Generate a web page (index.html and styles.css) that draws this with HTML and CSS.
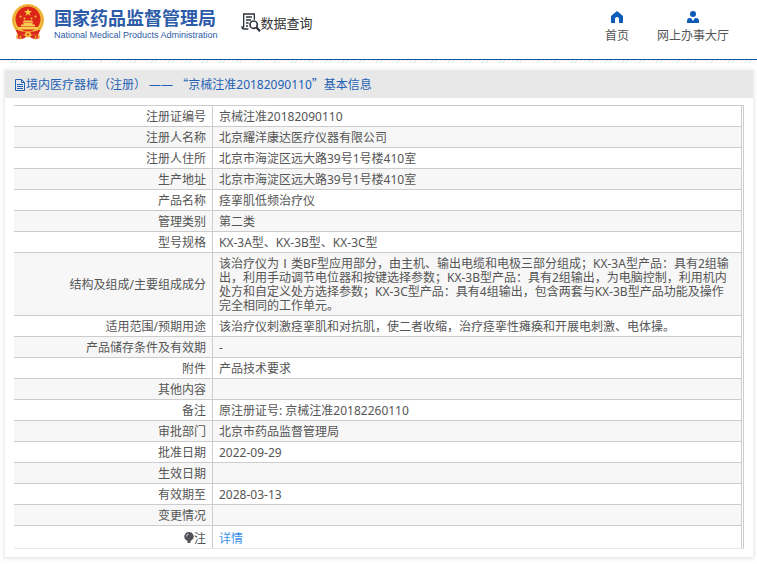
FILE: index.html
```html
<!DOCTYPE html>
<html lang="zh-CN">
<head>
<meta charset="utf-8">
<title>数据查询 - 国家药品监督管理局</title>
<link rel="stylesheet" href="styles.css">
</head>
<body>
<header class="site-header">
  <a class="brand" href="#">
    <svg class="emblem" viewBox="0 0 66 72" aria-hidden="true">
      <path d="M12 54 10 68q9 4 16 0l7-5 7 5q8 4 16 0l-2-14z" fill="#d9281c"/>
      <circle cx="33" cy="32" r="32" fill="#f2bb3d"/>
      <circle cx="33" cy="32" r="29" fill="none" stroke="#e39a2c" stroke-width="2" stroke-dasharray="3 3"/>
      <circle cx="33" cy="30" r="25" fill="#dc2419"/>
      <path d="m33 9 2 5h6l-5 4 2 6-5-4-5 4 2-6-5-4h6z" fill="#f7d13d"/>
      <g fill="#f5c93c"><circle cx="18" cy="25" r="2"/><circle cx="48" cy="25" r="2"/><circle cx="26" cy="29" r="2"/><circle cx="40" cy="29" r="2"/></g>
      <path d="M22 37l3-4h16l3 4zM24 38h18v3h5v4H19v-4h5zM13 46h40v5H13z" fill="#f6cc50"/>
      <path d="M8 51q25 10 50 0l-3 7q-11 5-15 3l-7-3-7 3q-8 2-15-3z" fill="#d9281c"/>
      <circle cx="33" cy="61" r="6" fill="#f2bb3d"/><circle cx="33" cy="61" r="2" fill="#d9281c"/>
      <path d="M12 59v10M18 63v8M48 63v8M54 59v10" stroke="#eda936" stroke-width="3"/>
    </svg>
    <span class="brand-text">
      <span class="brand-cn">国家药品监督管理局</span>
      <span class="brand-en">National Medical Products Administration</span>
    </span>
  </a>
  <a class="section" href="#">
    <svg class="search-icon" viewBox="0 0 60 60" fill="none" stroke="#30343d" stroke-width="4" aria-hidden="true">
      <path d="M22 48H9q-6 0-6-6h5V3h32v17M15 12h18M15 21h15M15 30h8M15 39h6"/>
      <circle cx="38" cy="35" r="11" stroke-width="5"/>
      <path d="m46 43 11 12" stroke-width="7"/>
    </svg>
    <span>数据查询</span>
  </a>
  <nav class="top-nav">
    <a href="#">
      <svg viewBox="0 0 12 12" aria-hidden="true"><path d="M6 0 0 5v7h4V8q0-2 2-2t2 2v4h4V5z" fill="#0f5bb8"/></svg>
      <span>首页</span>
    </a>
    <a href="#">
      <svg viewBox="0 0 12 12" aria-hidden="true"><circle cx="6" cy="3" r="3" fill="#0f5bb8"/><path d="M0 12V10q0-3 3-3h1l2 3 2-3h1q3 0 3 3v2z" fill="#0f5bb8"/></svg>
      <span>网上办事大厅</span>
    </a>
  </nav>
</header>
<main class="card">
  <h1 class="card-title">
    <svg viewBox="0 0 12 12" fill="none" stroke="#1f62b5" aria-hidden="true"><path d="M1.5.5h6l3 3v8h-9zM7.5.5v3h3M3 5.500h6M3 7.500h6M3 9.500h6"/></svg>
    <span>境内医疗器械（注册） —— <span class="wide">“</span>京械注准20182090110<span class="wide">”</span>基本信息</span>
  </h1>
  <div class="table-wrap">
    <table class="info">
      <tbody>
        <tr><th scope="row">注册证编号</th><td>京械注准20182090110</td></tr>
        <tr><th scope="row">注册人名称</th><td>北京耀洋康达医疗仪器有限公司</td></tr>
        <tr><th scope="row">注册人住所</th><td>北京市海淀区远大路39号1号楼410室</td></tr>
        <tr><th scope="row">生产地址</th><td>北京市海淀区远大路39号1号楼410室</td></tr>
        <tr><th scope="row">产品名称</th><td>痉挛肌低频治疗仪</td></tr>
        <tr><th scope="row">管理类别</th><td>第二类</td></tr>
        <tr><th scope="row">型号规格</th><td>KX-3A型、KX-3B型、KX-3C型</td></tr>
        <tr><th scope="row">结构及组成/主要组成成分</th><td>该治疗仪为Ⅰ类BF型应用部分，由主机、输出电缆和电极三部分组成；KX-3A型产品：具有2组输出，利用手动调节电位器和按键选择参数；KX-3B型产品：具有2组输出，为电脑控制，利用机内处方和自定义处方选择参数；KX-3C型产品：具有4组输出，包含两套与KX-3B型产品功能及操作完全相同的工作单元。</td></tr>
        <tr><th scope="row">适用范围/预期用途</th><td>该治疗仪刺激痉挛肌和对抗肌，使二者收缩，治疗痉挛性瘫痪和开展电刺激、电体操。</td></tr>
        <tr><th scope="row">产品储存条件及有效期</th><td>-</td></tr>
        <tr><th scope="row">附件</th><td>产品技术要求</td></tr>
        <tr><th scope="row">其他内容</th><td></td></tr>
        <tr><th scope="row">备注</th><td>原注册证号: 京械注准20182260110</td></tr>
        <tr><th scope="row">审批部门</th><td>北京市药品监督管理局</td></tr>
        <tr><th scope="row">批准日期</th><td>2022-09-29</td></tr>
        <tr><th scope="row">生效日期</th><td></td></tr>
        <tr><th scope="row">有效期至</th><td>2028-03-13</td></tr>
        <tr><th scope="row">变更情况</th><td></td></tr>
        <tr class="note"><th scope="row"><svg viewBox="0 0 10 12" aria-hidden="true"><path d="M5 0a4.500 4.500 0 0 1 3 8L6.500 9v2h-3v-2L2 8a4.500 4.500 0 0 1 3-8z" fill="#505257"/><path d="M2.500 4.500q0-2 2-2.500" fill="none" stroke="#ddd"/></svg>注</th><td><a href="#">详情</a></td></tr>
      </tbody>
    </table>
  </div>
</main>
</body>
</html>
```
FILE: styles.css
```css
* { box-sizing: border-box; }

body {
  margin: 0;
  background: #fff;
  color: #555;
  font: 12px/14px "Noto Sans", "Noto Sans CJK SC", sans-serif;
}

a { color: inherit; text-decoration: none; }
svg { display: block; }

.site-header {
  display: flex;
  align-items: flex-start;
  height: 63px;
  padding: 0 28px 0 11px;
  border-bottom: 3px solid transparent;
  background: linear-gradient(#0f549b, #0f549b) 0 100% / 100% 1px no-repeat padding-box,
    repeating-linear-gradient(135deg, #e2eaf3 0 1px, #fff 1px 3px) 0 100% / 100% 3px no-repeat border-box;
}

.brand { display: flex; gap: 9px; padding-top: 4px; }
.emblem { width: 34px; height: 36px; }
.brand-text { display: flex; flex-direction: column; color: #2c5ba8; padding-top: 3px; }
.brand-cn { font-size: 18px; line-height: 22px; font-weight: 700; }
.brand-en { font: 9px/12px "Liberation Sans", sans-serif; }

.section {
  display: flex;
  align-items: center;
  margin-left: 23px;
  padding-top: 13px;
  color: #333;
  font-size: 13px;
  line-height: 20px;
}
.search-icon { width: 20px; height: 20px; }

.top-nav { display: flex; gap: 28px; margin-left: auto; padding-top: 11px; }
.top-nav a { display: flex; flex-direction: column; align-items: center; gap: 6px; }
.top-nav svg { width: 12px; height: 12px; }

.card {
  margin: 7px 4px 8px 5px;
  padding-bottom: 8px;
  box-shadow: 0 1px 4px 1px #e6e6e6;
}
.card-title {
  display: flex;
  align-items: center;
  margin: 0;
  padding: 7px 9px 6px;
  background: #e8e8e8;
  color: #1f62b5;
  font-size: 12px;
  line-height: 14px;
  font-weight: 400;
}
.card-title svg { width: 12px; height: 12px; }
.wide { font-family: "Noto Sans CJK SC", sans-serif; }

.table-wrap {
  margin: 7px 9px 0;
  padding-right: 1px;
  border-top: 1px solid #ccc;
  border-right: 1px solid #ccc;
}
.info {
  width: 100%;
  table-layout: fixed;
  border-collapse: separate;
  border-spacing: 0;
}
.info th, .info td {
  height: 21px;
  padding: 4px 6px 2px;
  border-right: 1px solid #ccc;
  border-bottom: 1px solid #ccc;
  text-align: left;
  vertical-align: middle;
}
.info th { width: 199px; font-weight: 400; text-align: right; }
.info tr:nth-child(even) { background: #f7f7f7; }
.info .note th, .info .note td { height: 23px; padding-top: 6px; border-bottom-color: #e8e8e8; }
.note svg { display: inline-block; width: 10px; height: 12px; vertical-align: -1px; }
.note a { color: #3a8ee6; }
```
